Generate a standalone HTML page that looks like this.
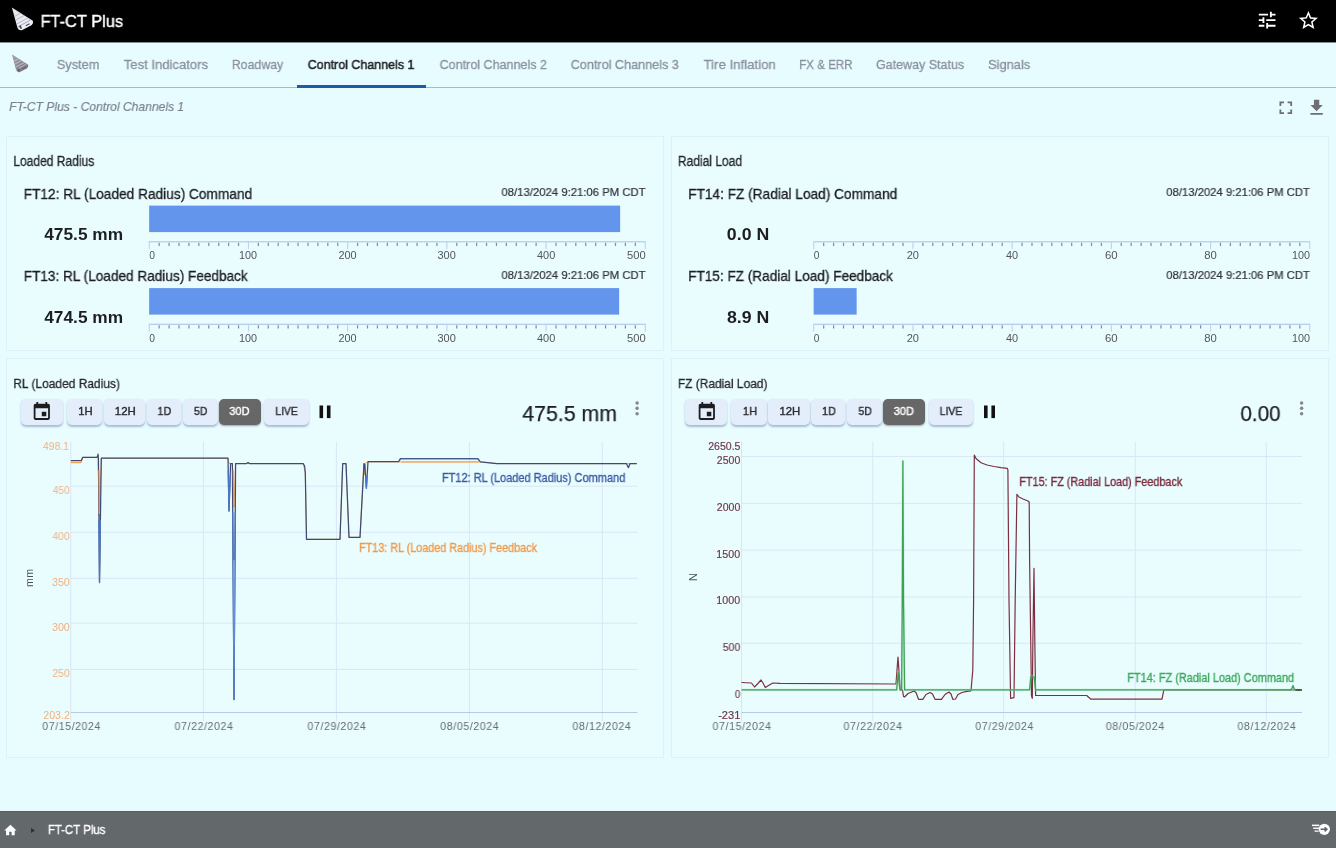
<!DOCTYPE html>
<html lang="en"><head><meta charset="utf-8"><title>FT-CT Plus - Control Channels 1</title>
<style>
html,body{margin:0;padding:0}
body{width:1336px;height:848px;position:relative;overflow:hidden;background:#e7fcff;font-family:"Liberation Sans",sans-serif;}
.t{position:absolute;white-space:nowrap;line-height:1;transform-origin:0 0;display:block;margin:0;padding:0;will-change:transform}
.a{position:absolute}
header,nav,footer,main,section{display:block;position:absolute;margin:0;padding:0}
.pw{left:0;top:0;width:0;height:0;overflow:visible}
.panel{position:absolute;box-sizing:border-box;border:1px solid #dcf2f8;background:#e9fdff}
.btn{position:absolute;box-sizing:border-box;height:25.5px;border-radius:5px;background:#e4eefb;box-shadow:0 1.2px 2px rgba(100,125,175,.5)}
.btn.on{background:#676767;box-shadow:0 1px 2px rgba(70,70,80,.5)}
svg{position:absolute;left:0;top:0;overflow:visible}
</style></head><body>
<header style="left:0;top:0;width:1336px;height:42px;background:#000;box-shadow:0 1px 0 rgba(40,50,55,.55)">
<svg style="left:11.3px;top:7px" width="23" height="24" viewBox="0 0 29 30.5"><defs><linearGradient id="g1" x1="0" y1="0" x2="0.75" y2="1"><stop offset="0" stop-color="#e2e3ea"/><stop offset="1" stop-color="#f0f1f7"/></linearGradient></defs>
<path d="M1,0.5 L27.6,17.6 Q28.8,21.3 25.2,23.6 L13.6,29.6 Q9.2,30.3 7.9,25.8 Z" fill="url(#g1)"/>
<path d="M5.2,11.5 L11.5,8 M6.3,16.5 L16,11 M7.3,21.5 L21.3,14" stroke="#aeb0ba" stroke-width="1.1" fill="none"/>
<path d="M8.6,25.3 L24.6,16.6" stroke="#9d9fa9" stroke-width="1.2" fill="none"/>
<ellipse cx="12" cy="25.6" rx="1.3" ry="2.5" transform="rotate(-26 12 25.6)" fill="#4a4a52"/>
<path d="M18.6,23.9 L23.6,21.3" stroke="#4a4a52" stroke-width="1.3"/></svg>
<span class="t " id="t0" style="left:40px;top:14px;font-size:16.57px;color:#fff;-webkit-text-stroke:0.4px #fff;transform:translateX(0.52px) scaleX(0.9892);">FT-CT Plus</span>
<svg style="left:1255.5px;top:9.3px" width="22.3" height="22.3" viewBox="0 0 24 24"><path fill="#fff" d="M3 17v2h6v-2H3zM3 5v2h10V5H3zm10 16v-2h8v-2h-8v-2h-2v6h2zM7 9v2H3v2h4v2h2V9H7zm14 4v-2H11v2h10zm-6-4h2V7h4V5h-4V3h-2v6z"/></svg>
<svg style="left:1297.2px;top:8.9px" width="22.8" height="22.8" viewBox="0 0 24 24"><path fill="#fff" d="M22 9.24l-7.19-.62L12 2 9.19 8.63 2 9.24l5.46 4.73L5.82 21 12 17.27 18.18 21l-1.63-7.03L22 9.24zM12 15.4l-3.76 2.27 1-4.28-3.32-2.88 4.38-.38L12 6.1l1.71 4.04 4.38.38-3.32 2.88 1 4.28L12 15.4z"/></svg>
</header>
<nav style="left:0;top:43px;width:1336px;height:45px;">
<div class="a" style="left:0;top:44px;width:1336px;height:1px;background:#a7b8d3"></div>
<div class="a" style="left:297px;top:42px;width:128.5px;height:2.6px;background:#1b5ba7"></div>
<svg style="left:11.4px;top:10.6px" width="18.2" height="18.7" viewBox="0 0 29 30.5"><defs><linearGradient id="g2" x1="0" y1="0" x2="0.75" y2="1"><stop offset="0" stop-color="#a9a7b1"/><stop offset="1" stop-color="#77747e"/></linearGradient></defs>
<path d="M1,0.5 L27.6,17.6 Q28.8,21.3 25.2,23.6 L13.6,29.6 Q9.2,30.3 7.9,25.8 Z" fill="url(#g2)"/>
<path d="M5.2,11.5 L11.5,8 M6.3,16.5 L16,11 M7.3,21.5 L21.3,14" stroke="#d5d8e2" stroke-width="1.1" fill="none"/>
<path d="M8.6,25.3 L24.6,16.6" stroke="#c9ccd6" stroke-width="1.2" fill="none"/>
<ellipse cx="12" cy="25.6" rx="1.3" ry="2.5" transform="rotate(-26 12 25.6)" fill="#57545d"/>
<path d="M18.6,23.9 L23.6,21.3" stroke="#57545d" stroke-width="1.3"/></svg>
</nav>
<span class="t " id="t1" style="left:56px;top:58px;font-size:13.66px;color:#8b8f9e;-webkit-text-stroke:0.3px #8b8f9e;transform:translateX(0.82px) scaleX(0.9335);">System</span>
<span class="t " id="t2" style="left:123px;top:58px;font-size:13.66px;color:#8b8f9e;-webkit-text-stroke:0.3px #8b8f9e;transform:translateX(0.79px) scaleX(0.9568);">Test Indicators</span>
<span class="t " id="t3" style="left:231px;top:58px;font-size:13.66px;color:#8b8f9e;-webkit-text-stroke:0.3px #8b8f9e;transform:translateX(0.78px) scaleX(0.9041);">Roadway</span>
<span class="t " id="t4" style="left:307px;top:58px;font-size:13.66px;color:#232326;-webkit-text-stroke:0.5px #232326;transform:translateX(0.74px) scaleX(0.9130);">Control Channels 1</span>
<span class="t " id="t5" style="left:439px;top:58px;font-size:13.66px;color:#8b8f9e;-webkit-text-stroke:0.3px #8b8f9e;transform:translateX(0.63px) scaleX(0.9184);">Control Channels 2</span>
<span class="t " id="t6" style="left:570px;top:58px;font-size:13.66px;color:#8b8f9e;-webkit-text-stroke:0.3px #8b8f9e;transform:translateX(0.74px) scaleX(0.9250);">Control Channels 3</span>
<span class="t " id="t7" style="left:703px;top:58px;font-size:13.66px;color:#8b8f9e;-webkit-text-stroke:0.3px #8b8f9e;transform:translateX(0.64px) scaleX(0.9662);">Tire Inflation</span>
<span class="t " id="t8" style="left:799px;top:58px;font-size:13.66px;color:#8b8f9e;-webkit-text-stroke:0.3px #8b8f9e;transform:translateX(0.07px) scaleX(0.8504);">FX &amp; ERR</span>
<span class="t " id="t9" style="left:876px;top:58px;font-size:13.66px;color:#8b8f9e;-webkit-text-stroke:0.3px #8b8f9e;transform:translateX(0.03px) scaleX(0.9142);">Gateway Status</span>
<span class="t " id="t10" style="left:988px;top:58px;font-size:13.66px;color:#8b8f9e;-webkit-text-stroke:0.3px #8b8f9e;transform:translateX(0.07px) scaleX(0.9394);">Signals</span>
<span class="t " id="t11" style="left:9px;top:100px;font-size:13.37px;color:#7c818e;font-style:italic;-webkit-text-stroke:0.2px #7c818e;transform:translateX(0.15px) scaleX(0.9054);">FT-CT Plus - Control Channels 1</span>
<svg style="left:1275.3px;top:96.9px" width="21.6" height="21.6" viewBox="0 0 24 24"><path fill="#6e6e74" d="M7 14H5v5h5v-2H7v-3zm-2-4h2V7h3V5H5v5zm12 7h-3v2h5v-5h-2v3zM14 5v2h3v3h2V5h-5z"/></svg>
<svg style="left:1306.2px;top:96.6px" width="21.2" height="21.2" viewBox="0 0 24 24"><path fill="#6e6e74" d="M19 9h-4V3H9v6H5l7 7 7-7zM5 18v2h14v-2H5z"/></svg>
<main style="left:0;top:0;width:1336px;height:811px">
<section class="pw" aria-label="Loaded Radius"><div class="panel" style="left:6px;top:136px;width:658px;height:215px"></div>
<span class="t " id="t12" style="left:13px;top:155px;font-size:13.81px;color:#26262a;-webkit-text-stroke:0.3px #26262a;transform:translateX(0.35px) scaleX(0.8713);">Loaded Radius</span>
<span class="t " id="t13" style="left:23px;top:187px;font-size:14.54px;color:#1d1d21;-webkit-text-stroke:0.32px #1d1d21;transform:translateX(0.66px) scaleX(0.9418);">FT12: RL (Loaded Radius) Command</span>
<span class="t " id="t14" style="left:501px;top:186px;font-size:11.77px;color:#303035;-webkit-text-stroke:0.2px #303035;transform:translateX(0.44px) scaleX(0.9629);">08/13/2024 9:21:06 PM CDT</span>
<span class="t " id="t15" style="left:44px;top:227px;font-size:16.72px;color:#1e1e21;font-weight:700;transform:translateX(0.26px) scaleX(1.0347);">475.5 mm</span>
<span class="t " id="t16" style="left:149px;top:251px;font-size:10.17px;color:#54555c;transform:translateX(0.24px) scaleX(1.0118);">0</span>
<span class="t " id="t17" style="left:238px;top:251px;font-size:10.17px;color:#54555c;transform:translateX(0.94px) scaleX(1.0642);">100</span>
<span class="t " id="t18" style="left:338px;top:251px;font-size:10.17px;color:#54555c;transform:translateX(0.52px) scaleX(1.0703);">200</span>
<span class="t " id="t19" style="left:437px;top:251px;font-size:10.17px;color:#54555c;transform:translateX(0.46px) scaleX(1.0780);">300</span>
<span class="t " id="t20" style="left:536px;top:251px;font-size:10.17px;color:#54555c;transform:translateX(0.95px) scaleX(1.0779);">400</span>
<span class="t " id="t21" style="left:627px;top:251px;font-size:10.17px;color:#54555c;transform:translateX(0.01px) scaleX(1.1030);">500</span>
<span class="t " id="t22" style="left:23px;top:269px;font-size:14.54px;color:#1d1d21;-webkit-text-stroke:0.32px #1d1d21;transform:translateX(0.72px) scaleX(0.9357);">FT13: RL (Loaded Radius) Feedback</span>
<span class="t " id="t23" style="left:501px;top:269px;font-size:11.77px;color:#303035;-webkit-text-stroke:0.2px #303035;transform:translateX(0.44px) scaleX(0.9629);">08/13/2024 9:21:06 PM CDT</span>
<span class="t " id="t24" style="left:44px;top:310px;font-size:16.72px;color:#1e1e21;font-weight:700;transform:translateX(0.26px) scaleX(1.0347);">474.5 mm</span>
<span class="t " id="t25" style="left:149px;top:334px;font-size:10.17px;color:#54555c;transform:translateX(0.24px) scaleX(1.0118);">0</span>
<span class="t " id="t26" style="left:238px;top:334px;font-size:10.17px;color:#54555c;transform:translateX(0.94px) scaleX(1.0642);">100</span>
<span class="t " id="t27" style="left:338px;top:334px;font-size:10.17px;color:#54555c;transform:translateX(0.52px) scaleX(1.0703);">200</span>
<span class="t " id="t28" style="left:437px;top:334px;font-size:10.17px;color:#54555c;transform:translateX(0.46px) scaleX(1.0780);">300</span>
<span class="t " id="t29" style="left:536px;top:334px;font-size:10.17px;color:#54555c;transform:translateX(0.95px) scaleX(1.0779);">400</span>
<span class="t " id="t30" style="left:627px;top:334px;font-size:10.17px;color:#54555c;transform:translateX(0.01px) scaleX(1.1030);">500</span>
<svg width="1336" height="848" viewBox="0 0 1336 848">
<rect x="149.15" y="205.60" width="470.99" height="26.5" fill="#6495ed"/>
<rect x="148.75" y="241.20" width="497.00" height="1.2" fill="#b5c8ef"/>
<path d="M149.25,241.80v7.2M248.45,241.80v7.2M347.65,241.80v7.2M446.85,241.80v7.2M546.05,241.80v7.2M645.25,241.80v7.2" stroke="#c0d0f0" stroke-width="1.1" fill="none"/>
<path d="M159.17,242.70v3.3M169.09,242.70v3.3M179.01,242.70v3.3M188.93,242.70v3.3M198.85,242.70v3.3M208.77,242.70v3.3M218.69,242.70v3.3M228.61,242.70v3.3M238.53,242.70v3.3M258.37,242.70v3.3M268.29,242.70v3.3M278.21,242.70v3.3M288.13,242.70v3.3M298.05,242.70v3.3M307.97,242.70v3.3M317.89,242.70v3.3M327.81,242.70v3.3M337.73,242.70v3.3M357.57,242.70v3.3M367.49,242.70v3.3M377.41,242.70v3.3M387.33,242.70v3.3M397.25,242.70v3.3M407.17,242.70v3.3M417.09,242.70v3.3M427.01,242.70v3.3M436.93,242.70v3.3M456.77,242.70v3.3M466.69,242.70v3.3M476.61,242.70v3.3M486.53,242.70v3.3M496.45,242.70v3.3M506.37,242.70v3.3M516.29,242.70v3.3M526.21,242.70v3.3M536.13,242.70v3.3M555.97,242.70v3.3M565.89,242.70v3.3M575.81,242.70v3.3M585.73,242.70v3.3M595.65,242.70v3.3M605.57,242.70v3.3M615.49,242.70v3.3M625.41,242.70v3.3M635.33,242.70v3.3" stroke="#858da1" stroke-width="1.25" fill="none"/>
<rect x="149.15" y="288.10" width="470.00" height="26.5" fill="#6495ed"/>
<rect x="148.75" y="323.70" width="497.00" height="1.2" fill="#b5c8ef"/>
<path d="M149.25,324.30v7.2M248.45,324.30v7.2M347.65,324.30v7.2M446.85,324.30v7.2M546.05,324.30v7.2M645.25,324.30v7.2" stroke="#c0d0f0" stroke-width="1.1" fill="none"/>
<path d="M159.17,325.20v3.3M169.09,325.20v3.3M179.01,325.20v3.3M188.93,325.20v3.3M198.85,325.20v3.3M208.77,325.20v3.3M218.69,325.20v3.3M228.61,325.20v3.3M238.53,325.20v3.3M258.37,325.20v3.3M268.29,325.20v3.3M278.21,325.20v3.3M288.13,325.20v3.3M298.05,325.20v3.3M307.97,325.20v3.3M317.89,325.20v3.3M327.81,325.20v3.3M337.73,325.20v3.3M357.57,325.20v3.3M367.49,325.20v3.3M377.41,325.20v3.3M387.33,325.20v3.3M397.25,325.20v3.3M407.17,325.20v3.3M417.09,325.20v3.3M427.01,325.20v3.3M436.93,325.20v3.3M456.77,325.20v3.3M466.69,325.20v3.3M476.61,325.20v3.3M486.53,325.20v3.3M496.45,325.20v3.3M506.37,325.20v3.3M516.29,325.20v3.3M526.21,325.20v3.3M536.13,325.20v3.3M555.97,325.20v3.3M565.89,325.20v3.3M575.81,325.20v3.3M585.73,325.20v3.3M595.65,325.20v3.3M605.57,325.20v3.3M615.49,325.20v3.3M625.41,325.20v3.3M635.33,325.20v3.3" stroke="#858da1" stroke-width="1.25" fill="none"/>
</svg>
</section>
<section class="pw" aria-label="Radial Load"><div class="panel" style="left:671px;top:136px;width:657.5px;height:215px"></div>
<span class="t " id="t31" style="left:677px;top:155px;font-size:13.81px;color:#26262a;-webkit-text-stroke:0.3px #26262a;transform:translateX(0.83px) scaleX(0.8727);">Radial Load</span>
<span class="t " id="t32" style="left:688px;top:187px;font-size:14.54px;color:#1d1d21;-webkit-text-stroke:0.32px #1d1d21;transform:translateX(0.16px) scaleX(0.9414);">FT14: FZ (Radial Load) Command</span>
<span class="t " id="t33" style="left:1166px;top:186px;font-size:11.77px;color:#303035;-webkit-text-stroke:0.2px #303035;transform:translateX(0.28px) scaleX(0.9591);">08/13/2024 9:21:06 PM CDT</span>
<span class="t " id="t34" style="left:726px;top:227px;font-size:16.72px;color:#1e1e21;font-weight:700;transform:translateX(0.87px) scaleX(1.0598);">0.0 N</span>
<span class="t " id="t35" style="left:813px;top:251px;font-size:10.17px;color:#54555c;transform:translateX(0.73px) scaleX(1.0030);">0</span>
<span class="t " id="t36" style="left:906px;top:251px;font-size:10.17px;color:#54555c;transform:translateX(0.73px) scaleX(1.0854);">20</span>
<span class="t " id="t37" style="left:1005px;top:251px;font-size:10.17px;color:#54555c;transform:translateX(0.95px) scaleX(1.0749);">40</span>
<span class="t " id="t38" style="left:1104px;top:251px;font-size:10.17px;color:#54555c;transform:translateX(0.99px) scaleX(1.1233);">60</span>
<span class="t " id="t39" style="left:1204px;top:251px;font-size:10.17px;color:#54555c;transform:translateX(0.18px) scaleX(1.1117);">80</span>
<span class="t " id="t40" style="left:1291px;top:251px;font-size:10.17px;color:#54555c;transform:translateX(0.90px) scaleX(1.0626);">100</span>
<span class="t " id="t41" style="left:688px;top:269px;font-size:14.54px;color:#1d1d21;-webkit-text-stroke:0.32px #1d1d21;transform:translateX(0.16px) scaleX(0.9355);">FT15: FZ (Radial Load) Feedback</span>
<span class="t " id="t42" style="left:1166px;top:269px;font-size:11.77px;color:#303035;-webkit-text-stroke:0.2px #303035;transform:translateX(0.28px) scaleX(0.9591);">08/13/2024 9:21:06 PM CDT</span>
<span class="t " id="t43" style="left:726px;top:310px;font-size:16.72px;color:#1e1e21;font-weight:700;transform:translateX(0.92px) scaleX(1.0610);">8.9 N</span>
<span class="t " id="t44" style="left:813px;top:334px;font-size:10.17px;color:#54555c;transform:translateX(0.73px) scaleX(1.0030);">0</span>
<span class="t " id="t45" style="left:906px;top:334px;font-size:10.17px;color:#54555c;transform:translateX(0.73px) scaleX(1.0854);">20</span>
<span class="t " id="t46" style="left:1005px;top:334px;font-size:10.17px;color:#54555c;transform:translateX(0.95px) scaleX(1.0749);">40</span>
<span class="t " id="t47" style="left:1104px;top:334px;font-size:10.17px;color:#54555c;transform:translateX(0.99px) scaleX(1.1233);">60</span>
<span class="t " id="t48" style="left:1204px;top:334px;font-size:10.17px;color:#54555c;transform:translateX(0.18px) scaleX(1.1117);">80</span>
<span class="t " id="t49" style="left:1291px;top:334px;font-size:10.17px;color:#54555c;transform:translateX(0.90px) scaleX(1.0626);">100</span>
<svg width="1336" height="848" viewBox="0 0 1336 848">
<rect x="813.25" y="241.20" width="497.00" height="1.2" fill="#b5c8ef"/>
<path d="M813.75,241.80v7.2M912.95,241.80v7.2M1012.15,241.80v7.2M1111.35,241.80v7.2M1210.55,241.80v7.2M1309.75,241.80v7.2" stroke="#c0d0f0" stroke-width="1.1" fill="none"/>
<path d="M823.67,242.70v3.3M833.59,242.70v3.3M843.51,242.70v3.3M853.43,242.70v3.3M863.35,242.70v3.3M873.27,242.70v3.3M883.19,242.70v3.3M893.11,242.70v3.3M903.03,242.70v3.3M922.87,242.70v3.3M932.79,242.70v3.3M942.71,242.70v3.3M952.63,242.70v3.3M962.55,242.70v3.3M972.47,242.70v3.3M982.39,242.70v3.3M992.31,242.70v3.3M1002.23,242.70v3.3M1022.07,242.70v3.3M1031.99,242.70v3.3M1041.91,242.70v3.3M1051.83,242.70v3.3M1061.75,242.70v3.3M1071.67,242.70v3.3M1081.59,242.70v3.3M1091.51,242.70v3.3M1101.43,242.70v3.3M1121.27,242.70v3.3M1131.19,242.70v3.3M1141.11,242.70v3.3M1151.03,242.70v3.3M1160.95,242.70v3.3M1170.87,242.70v3.3M1180.79,242.70v3.3M1190.71,242.70v3.3M1200.63,242.70v3.3M1220.47,242.70v3.3M1230.39,242.70v3.3M1240.31,242.70v3.3M1250.23,242.70v3.3M1260.15,242.70v3.3M1270.07,242.70v3.3M1279.99,242.70v3.3M1289.91,242.70v3.3M1299.83,242.70v3.3" stroke="#858da1" stroke-width="1.25" fill="none"/>
<rect x="813.65" y="288.10" width="43.00" height="26.5" fill="#6495ed"/>
<rect x="813.25" y="323.70" width="497.00" height="1.2" fill="#b5c8ef"/>
<path d="M813.75,324.30v7.2M912.95,324.30v7.2M1012.15,324.30v7.2M1111.35,324.30v7.2M1210.55,324.30v7.2M1309.75,324.30v7.2" stroke="#c0d0f0" stroke-width="1.1" fill="none"/>
<path d="M823.67,325.20v3.3M833.59,325.20v3.3M843.51,325.20v3.3M853.43,325.20v3.3M863.35,325.20v3.3M873.27,325.20v3.3M883.19,325.20v3.3M893.11,325.20v3.3M903.03,325.20v3.3M922.87,325.20v3.3M932.79,325.20v3.3M942.71,325.20v3.3M952.63,325.20v3.3M962.55,325.20v3.3M972.47,325.20v3.3M982.39,325.20v3.3M992.31,325.20v3.3M1002.23,325.20v3.3M1022.07,325.20v3.3M1031.99,325.20v3.3M1041.91,325.20v3.3M1051.83,325.20v3.3M1061.75,325.20v3.3M1071.67,325.20v3.3M1081.59,325.20v3.3M1091.51,325.20v3.3M1101.43,325.20v3.3M1121.27,325.20v3.3M1131.19,325.20v3.3M1141.11,325.20v3.3M1151.03,325.20v3.3M1160.95,325.20v3.3M1170.87,325.20v3.3M1180.79,325.20v3.3M1190.71,325.20v3.3M1200.63,325.20v3.3M1220.47,325.20v3.3M1230.39,325.20v3.3M1240.31,325.20v3.3M1250.23,325.20v3.3M1260.15,325.20v3.3M1270.07,325.20v3.3M1279.99,325.20v3.3M1289.91,325.20v3.3M1299.83,325.20v3.3" stroke="#858da1" stroke-width="1.25" fill="none"/>
</svg>
</section>
<section class="pw" aria-label="RL (Loaded Radius)"><div class="panel" style="left:6px;top:358px;width:658px;height:400px"></div>
<span class="t " id="t50" style="left:13px;top:377px;font-size:13.66px;color:#26262a;-webkit-text-stroke:0.3px #26262a;transform:translateX(0.30px) scaleX(0.8760);">RL (Loaded Radius)</span>
<div class="btn" style="left:20.50px;top:399.3px;width:42.00px"></div>
<div class="btn" style="left:66.75px;top:399.3px;width:35.25px"></div>
<span class="t " id="t51" style="left:78px;top:406px;font-size:11.19px;color:#2c2c31;-webkit-text-stroke:0.4px #2c2c31;transform:translateX(0.27px) scaleX(1.0055);">1H</span>
<div class="btn" style="left:103.50px;top:399.3px;width:41.50px"></div>
<span class="t " id="t52" style="left:114px;top:406px;font-size:11.19px;color:#2c2c31;-webkit-text-stroke:0.4px #2c2c31;transform:translateX(0.87px) scaleX(1.0237);">12H</span>
<div class="btn" style="left:146.50px;top:399.3px;width:34.00px"></div>
<span class="t " id="t53" style="left:157px;top:406px;font-size:11.19px;color:#2c2c31;-webkit-text-stroke:0.4px #2c2c31;transform:translateX(0.52px) scaleX(0.9586);">1D</span>
<div class="btn" style="left:182.50px;top:399.3px;width:35.00px"></div>
<span class="t " id="t54" style="left:194px;top:406px;font-size:11.19px;color:#2c2c31;-webkit-text-stroke:0.4px #2c2c31;transform:translateX(0.01px) scaleX(0.9311);">5D</span>
<div class="btn on" style="left:218.75px;top:399.3px;width:42.00px"></div>
<span class="t " id="t55" style="left:229px;top:406px;font-size:11.19px;color:#fff;-webkit-text-stroke:0.4px #fff;transform:translateX(0.33px) scaleX(0.9816);">30D</span>
<div class="btn" style="left:264.25px;top:399.3px;width:44.50px"></div>
<span class="t " id="t56" style="left:275px;top:406px;font-size:11.19px;color:#2c2c31;-webkit-text-stroke:0.4px #2c2c31;transform:translateX(0.37px) scaleX(0.9254);">LIVE</span>
<svg style="left:31.40px;top:401.1px" width="21.6" height="21.6" viewBox="0 0 24 24"><path fill="#1d1d1f" d="M17 12h-5v5h5v-5zM16 1v2H8V1H6v2H5c-1.11 0-1.99.9-1.99 2L3 19c0 1.1.89 2 2 2h14c1.1 0 2-.9 2-2V5c0-1.1-.9-2-2-2h-1V1h-2zm3 18H5V8h14v11z"/></svg>
<svg width="1336" height="848" viewBox="0 0 1336 848"><rect x="319.5" y="405.5" width="3.6" height="12.6" fill="#111"/><rect x="326.9" y="405.5" width="3.6" height="12.6" fill="#111"/><circle cx="637.1" cy="402.9" r="1.75" fill="#85858c"/><circle cx="637.1" cy="408.3" r="1.75" fill="#85858c"/><circle cx="637.1" cy="413.7" r="1.75" fill="#85858c"/></svg>
<span class="t " id="t57" style="left:522px;top:403px;font-size:21.80px;color:#1e1e22;-webkit-text-stroke:0.25px #1e1e22;transform:translateX(0.34px) scaleX(0.9766);">475.5 mm</span>
<svg width="1336" height="848" viewBox="0 0 1336 848"><path d="M203.40,441.8V721.0M336.40,441.8V721.0M469.40,441.8V721.0M602.30,441.8V721.0M70.75,486.20H637.50M70.75,532.30H637.50M70.75,578.30H637.50M70.75,623.20H637.50M70.75,669.40H637.50" stroke="#d9e7f5" stroke-width="1" fill="none"/><path d="M70.75,441.8V721.0" stroke="#d7e5f4" stroke-width="1" fill="none"/><path d="M70.75,712.5H637.50" stroke="#b9c9e5" stroke-width="1" fill="none"/><polyline points="70.75,462.50 81.30,462.50 82.60,457.40 96.60,457.40 98.00,455.00 99.40,516.00 101.30,458.20 228.00,458.20 229.20,463.50 232.40,463.50 234.00,507.00 235.60,463.50 303.20,463.60 305.30,473.00 306.50,539.30 340.00,539.30 342.70,463.60 346.00,463.60 349.00,537.40 360.00,537.40 364.00,463.60 364.60,475.00 365.40,463.00 368.00,461.90 480.40,461.90 497.00,463.60 636.80,463.60" fill="none"  stroke="#f3a054" stroke-width="0.9" stroke-linejoin="round"/><polyline points="70.75,460.60 81.30,460.60 82.60,457.40 96.60,457.40 97.60,456.60 98.00,454.20 98.40,458.00 99.50,582.50 101.30,458.20 228.00,458.20 229.00,511.00 230.60,463.50 232.40,463.50 234.00,699.50 235.60,463.50 246.50,463.50 248.00,462.40 249.50,463.60 303.20,463.60 304.60,466.00 305.30,473.00 306.50,539.30 340.00,539.30 342.70,463.60 346.00,463.60 349.00,537.40 360.00,537.40 364.00,463.60 364.80,464.50 366.40,488.30 368.00,461.70 398.60,461.70 400.50,458.70 477.70,458.70 480.40,461.90 497.00,463.60 626.40,463.60 628.40,467.70 630.00,463.60 636.80,463.60" fill="none" stroke="#3f4a72" stroke-width="1.25" stroke-linejoin="round"/><polyline points="70.75,462.60 81.20,462.60" fill="none" stroke="#f3a054" stroke-width="1.2" stroke-linejoin="round"/><polyline points="401.50,462.00 478.50,462.00" fill="none" stroke="#f3a054" stroke-width="1.2" stroke-linejoin="round"/><polyline points="99.00,470.00 99.35,514.00" fill="none" stroke="#f3a054" stroke-width="1.2" stroke-linejoin="round"/><polyline points="233.30,470.00 233.85,505.00" fill="none" stroke="#f3a054" stroke-width="1.2" stroke-linejoin="round"/><polyline points="98.95,520.00 99.50,582.50 100.40,520.00" fill="none" stroke="#4a76c8" stroke-width="1.25" stroke-linejoin="round"/><polyline points="228.20,470.00 229.00,511.00 230.30,474.00" fill="none" stroke="#4a76c8" stroke-width="1.25" stroke-linejoin="round"/><polyline points="232.75,512.00 234.00,699.50 235.25,512.00" fill="none" stroke="#4a76c8" stroke-width="1.25" stroke-linejoin="round"/><polyline points="365.60,476.00 366.40,488.30 367.10,476.00" fill="none" stroke="#4a76c8" stroke-width="1.25" stroke-linejoin="round"/><polyline points="399.40,460.40 400.50,458.70 477.70,458.70 479.20,460.40" fill="none" stroke="#485f9c" stroke-width="1.15" stroke-linejoin="round"/><polyline points="233.10,560.00 234.00,699.00 234.90,560.00" fill="#7da2e4" stroke="none"/></svg>
<span class="t " id="t58" style="left:42px;top:442px;font-size:10.47px;color:#f2b07e;transform:translateX(0.99px) scaleX(0.9853);">498.1</span>
<span class="t " id="t59" style="left:52px;top:486px;font-size:10.47px;color:#f2b07e;transform:translateX(0.79px) scaleX(0.9617);">450</span>
<span class="t " id="t60" style="left:52px;top:532px;font-size:10.47px;color:#f2b07e;transform:translateX(0.46px) scaleX(0.9807);">400</span>
<span class="t " id="t61" style="left:51px;top:578px;font-size:10.47px;color:#f2b07e;transform:translateX(0.93px) scaleX(1.0258);">350</span>
<span class="t " id="t62" style="left:51px;top:623px;font-size:10.47px;color:#f2b07e;transform:translateX(0.93px) scaleX(1.0258);">300</span>
<span class="t " id="t63" style="left:52px;top:669px;font-size:10.47px;color:#f2b07e;transform:translateX(0.41px) scaleX(0.9848);">250</span>
<span class="t " id="t64" style="left:43px;top:711px;font-size:10.47px;color:#f2b07e;transform:translateX(0.32px) scaleX(1.0114);">203.2</span>
<span class="t " id="t65" style="left:42px;top:721px;font-size:11.05px;color:#686a71;letter-spacing:0.6px;transform:translateX(0.30px) scaleX(0.9562);">07/15/2024</span>
<span class="t " id="t66" style="left:174px;top:721px;font-size:11.05px;color:#686a71;letter-spacing:0.6px;transform:translateX(0.52px) scaleX(0.9626);">07/22/2024</span>
<span class="t " id="t67" style="left:307px;top:721px;font-size:11.05px;color:#686a71;letter-spacing:0.6px;transform:translateX(0.42px) scaleX(0.9623);">07/29/2024</span>
<span class="t " id="t68" style="left:440px;top:721px;font-size:11.05px;color:#686a71;letter-spacing:0.6px;transform:translateX(0.16px) scaleX(0.9657);">08/05/2024</span>
<span class="t " id="t69" style="left:572px;top:721px;font-size:11.05px;color:#686a71;letter-spacing:0.6px;transform:translateX(0.42px) scaleX(0.9623);">08/12/2024</span>
<span class="t " id="t70" style="left:441px;top:473px;font-size:11.92px;color:#3c5ba3;-webkit-text-stroke:0.35px #3c5ba3;transform:translateX(0.89px) scaleX(0.9225);">FT12: RL (Loaded Radius) Command</span>
<span class="t " id="t71" style="left:359px;top:543px;font-size:11.92px;color:#f19a4b;-webkit-text-stroke:0.35px #f19a4b;transform:translateX(0.00px) scaleX(0.9075);">FT13: RL (Loaded Radius) Feedback</span>
<div class="a" style="left:20px;top:572px;width:18px;height:12px;transform:rotate(-90deg);transform-origin:50% 50%;font-size:10.6px;line-height:12px;text-align:center;color:#4c4e55;letter-spacing:.4px">mm</div>
</section>
<section class="pw" aria-label="FZ (Radial Load)"><div class="panel" style="left:671px;top:358px;width:657.5px;height:400px"></div>
<span class="t " id="t72" style="left:677px;top:377px;font-size:13.66px;color:#26262a;-webkit-text-stroke:0.3px #26262a;transform:translateX(0.83px) scaleX(0.8747);">FZ (Radial Load)</span>
<div class="btn" style="left:685.00px;top:399.3px;width:42.00px"></div>
<div class="btn" style="left:731.25px;top:399.3px;width:35.25px"></div>
<span class="t " id="t73" style="left:742px;top:406px;font-size:11.19px;color:#2c2c31;-webkit-text-stroke:0.4px #2c2c31;transform:translateX(0.84px) scaleX(0.9962);">1H</span>
<div class="btn" style="left:768.00px;top:399.3px;width:41.50px"></div>
<span class="t " id="t74" style="left:779px;top:406px;font-size:11.19px;color:#2c2c31;-webkit-text-stroke:0.4px #2c2c31;transform:translateX(0.45px) scaleX(1.0121);">12H</span>
<div class="btn" style="left:811.00px;top:399.3px;width:34.00px"></div>
<span class="t " id="t75" style="left:822px;top:406px;font-size:11.19px;color:#2c2c31;-webkit-text-stroke:0.4px #2c2c31;transform:translateX(0.05px) scaleX(0.9601);">1D</span>
<div class="btn" style="left:847.00px;top:399.3px;width:35.00px"></div>
<span class="t " id="t76" style="left:858px;top:406px;font-size:11.19px;color:#2c2c31;-webkit-text-stroke:0.4px #2c2c31;transform:translateX(0.50px) scaleX(0.9259);">5D</span>
<div class="btn on" style="left:883.25px;top:399.3px;width:42.00px"></div>
<span class="t " id="t77" style="left:893px;top:406px;font-size:11.19px;color:#fff;-webkit-text-stroke:0.4px #fff;transform:translateX(0.75px) scaleX(0.9807);">30D</span>
<div class="btn" style="left:928.75px;top:399.3px;width:44.50px"></div>
<span class="t " id="t78" style="left:939px;top:406px;font-size:11.19px;color:#2c2c31;-webkit-text-stroke:0.4px #2c2c31;transform:translateX(0.69px) scaleX(0.9340);">LIVE</span>
<svg style="left:695.90px;top:401.1px" width="21.6" height="21.6" viewBox="0 0 24 24"><path fill="#1d1d1f" d="M17 12h-5v5h5v-5zM16 1v2H8V1H6v2H5c-1.11 0-1.99.9-1.99 2L3 19c0 1.1.89 2 2 2h14c1.1 0 2-.9 2-2V5c0-1.1-.9-2-2-2h-1V1h-2zm3 18H5V8h14v11z"/></svg>
<svg width="1336" height="848" viewBox="0 0 1336 848"><rect x="984.0" y="405.5" width="3.6" height="12.6" fill="#111"/><rect x="991.4" y="405.5" width="3.6" height="12.6" fill="#111"/><circle cx="1301.6" cy="402.9" r="1.75" fill="#85858c"/><circle cx="1301.6" cy="408.3" r="1.75" fill="#85858c"/><circle cx="1301.6" cy="413.7" r="1.75" fill="#85858c"/></svg>
<span class="t " id="t79" style="left:1240px;top:403px;font-size:21.80px;color:#1e1e22;-webkit-text-stroke:0.25px #1e1e22;transform:translateX(0.42px) scaleX(0.9461);">0.00</span>
<svg width="1336" height="848" viewBox="0 0 1336 848"><path d="M872.80,441.8V721.0M1003.70,441.8V721.0M1135.30,441.8V721.0M1266.30,441.8V721.0M741.50,456.50H1302.00M741.50,503.40H1302.00M741.50,550.20H1302.00M741.50,597.00H1302.00M741.50,643.30H1302.00" stroke="#d9e7f5" stroke-width="1" fill="none"/><path d="M741.50,441.8V721.0" stroke="#d7e5f4" stroke-width="1" fill="none"/><path d="M741.50,712.5H1302.00" stroke="#b9c9e5" stroke-width="1" fill="none"/><polyline points="741.50,682.50 751.50,683.00 754.50,687.00 757.50,684.00 761.00,680.00 763.00,683.00 765.30,687.50 768.50,685.50 772.80,683.00 780.00,683.40 896.00,684.00 897.00,670.00 898.00,657.00 899.00,672.00 900.30,690.00 902.50,690.00 903.50,696.50 904.50,697.00 908.00,693.50 914.00,691.00 916.00,692.50 918.50,699.30 922.80,699.30 926.00,694.50 930.00,692.50 932.50,694.00 935.00,699.30 941.50,699.30 945.00,694.50 949.00,692.00 951.00,694.00 952.80,699.30 955.50,699.00 958.00,694.50 962.00,692.50 967.00,691.40 971.00,690.80 972.80,670.00 973.60,600.00 974.30,455.00 976.00,458.50 981.00,462.70 987.00,465.00 994.00,466.50 1001.00,467.70 1007.30,468.40 1007.90,470.00 1009.00,600.00 1010.60,698.40 1014.00,697.60 1015.20,600.00 1016.90,494.30 1019.00,497.00 1023.00,499.00 1027.50,500.70 1029.20,502.00 1029.60,560.00 1031.50,696.00 1032.30,698.40 1032.90,640.00 1034.00,568.30 1034.80,640.00 1035.60,695.50 1086.70,695.50 1090.90,699.20 1162.00,699.20 1163.80,690.00 1301.80,690.00" fill="none"  stroke="#7d2f40" stroke-width="1.2" stroke-linejoin="round"/><polyline points="741.50,689.90 896.60,689.90 897.60,680.00 898.20,672.50 898.80,680.00 900.00,689.90 901.60,689.90 902.30,600.00 902.90,461.00 903.50,600.00 904.60,689.90 1029.60,689.90 1030.80,677.00 1031.80,675.80 1033.00,676.50 1034.20,677.00 1035.60,689.90 1291.00,689.90 1292.30,687.50 1293.00,685.70 1294.00,688.50 1295.20,689.90 1301.80,689.90" fill="none" stroke="#8fdcae" stroke-width="2.3" stroke-linejoin="round" opacity=".45"/><polyline points="741.50,689.90 896.60,689.90 897.60,680.00 898.20,672.50 898.80,680.00 900.00,689.90 901.60,689.90 902.30,600.00 902.90,461.00 903.50,600.00 904.60,689.90 1029.60,689.90 1030.80,677.00 1031.80,675.80 1033.00,676.50 1034.20,677.00 1035.60,689.90 1291.00,689.90 1292.30,687.50 1293.00,685.70 1294.00,688.50 1295.20,689.90 1301.80,689.90" fill="none" stroke="#3f9f55" stroke-width="1.25" stroke-linejoin="round"/><polyline points="1295.5,690 1301.8,690" fill="none" stroke="#4b3a33" stroke-width="1.4"/></svg>
<span class="t " id="t80" style="left:708px;top:442px;font-size:10.47px;color:#6d3445;-webkit-text-stroke:0.15px #6d3445;transform:translateX(0.16px) scaleX(1.0076);">2650.5</span>
<span class="t " id="t81" style="left:716px;top:456px;font-size:10.47px;color:#6d3445;-webkit-text-stroke:0.15px #6d3445;transform:translateX(0.86px) scaleX(1.0042);">2500</span>
<span class="t " id="t82" style="left:716px;top:503px;font-size:10.47px;color:#6d3445;-webkit-text-stroke:0.15px #6d3445;transform:translateX(0.86px) scaleX(1.0042);">2000</span>
<span class="t " id="t83" style="left:716px;top:550px;font-size:10.47px;color:#6d3445;-webkit-text-stroke:0.15px #6d3445;transform:translateX(0.32px) scaleX(1.0219);">1500</span>
<span class="t " id="t84" style="left:716px;top:596px;font-size:10.47px;color:#6d3445;-webkit-text-stroke:0.15px #6d3445;transform:translateX(0.32px) scaleX(1.0219);">1000</span>
<span class="t " id="t85" style="left:722px;top:643px;font-size:10.47px;color:#6d3445;-webkit-text-stroke:0.15px #6d3445;transform:translateX(0.77px) scaleX(0.9933);">500</span>
<span class="t " id="t86" style="left:734px;top:690px;font-size:10.47px;color:#6d3445;-webkit-text-stroke:0.15px #6d3445;transform:translateX(0.81px) scaleX(0.9313);">0</span>
<span class="t " id="t87" style="left:718px;top:711px;font-size:10.47px;color:#6d3445;-webkit-text-stroke:0.15px #6d3445;transform:translateX(0.17px) scaleX(1.0585);">-231</span>
<span class="t " id="t88" style="left:712px;top:721px;font-size:11.05px;color:#686a71;letter-spacing:0.6px;transform:translateX(0.48px) scaleX(0.9646);">07/15/2024</span>
<span class="t " id="t89" style="left:843px;top:721px;font-size:11.05px;color:#686a71;letter-spacing:0.6px;transform:translateX(0.48px) scaleX(0.9646);">07/22/2024</span>
<span class="t " id="t90" style="left:975px;top:721px;font-size:11.05px;color:#686a71;letter-spacing:0.6px;transform:translateX(0.30px) scaleX(0.9562);">07/29/2024</span>
<span class="t " id="t91" style="left:1105px;top:721px;font-size:11.05px;color:#686a71;letter-spacing:0.6px;transform:translateX(0.82px) scaleX(0.9621);">08/05/2024</span>
<span class="t " id="t92" style="left:1237px;top:721px;font-size:11.05px;color:#686a71;letter-spacing:0.6px;transform:translateX(0.42px) scaleX(0.9623);">08/12/2024</span>
<span class="t " id="t93" style="left:1019px;top:477px;font-size:11.92px;color:#7a2a3c;-webkit-text-stroke:0.35px #7a2a3c;transform:translateX(0.30px) scaleX(0.9082);">FT15: FZ (Radial Load) Feedback</span>
<span class="t " id="t94" style="left:1127px;top:673px;font-size:11.92px;color:#3aa85a;-webkit-text-stroke:0.35px #3aa85a;transform:translateX(0.25px) scaleX(0.9171);">FT14: FZ (Radial Load) Command</span>
<div class="a" style="left:683.9px;top:570.7px;width:18px;height:12px;transform:rotate(-90deg);transform-origin:50% 50%;font-size:11.5px;line-height:12px;text-align:center;color:#55575d">N</div>
</section>
</main>
<footer style="left:0;top:811px;width:1336px;height:37px;background:#63686a;box-shadow:inset 0 1px 0 #575e60">
<svg style="left:3px;top:11.8px" width="14.8" height="14.8" viewBox="0 0 24 24"><path fill="#fff" d="M10 20v-6h4v6h5v-8h3L12 3 2 12h3v8z"/></svg>
<svg style="left:30.5px;top:16.8px" width="4" height="5" viewBox="0 0 4 5"><path fill="#2e3233" d="M0 0L4 2.5L0 5z"/></svg>
<svg style="left:1310px;top:10px" width="24" height="18" viewBox="0 0 24 18">
<rect x="2" y="3.6" width="7.3" height="1.5" fill="#fff"/><rect x="3.2" y="6.5" width="6" height="1.5" fill="#f1f1f8"/><rect x="4.6" y="9.4" width="4" height="1.5" fill="#e8e8f4"/>
<circle cx="14.3" cy="8.3" r="5.6" fill="#fff"/><path d="M10.6 8.3H16.2M14.6 6.2L16.9 8.3L14.6 10.4" stroke="#5d6264" stroke-width="1.5" fill="none"/></svg>
<span class="t " id="t95" style="left:47px;top:12px;font-size:13.08px;color:#fff;-webkit-text-stroke:0.4px #fff;transform:translateX(0.87px) scaleX(0.8735);">FT-CT Plus</span>
</footer>
</body></html>
